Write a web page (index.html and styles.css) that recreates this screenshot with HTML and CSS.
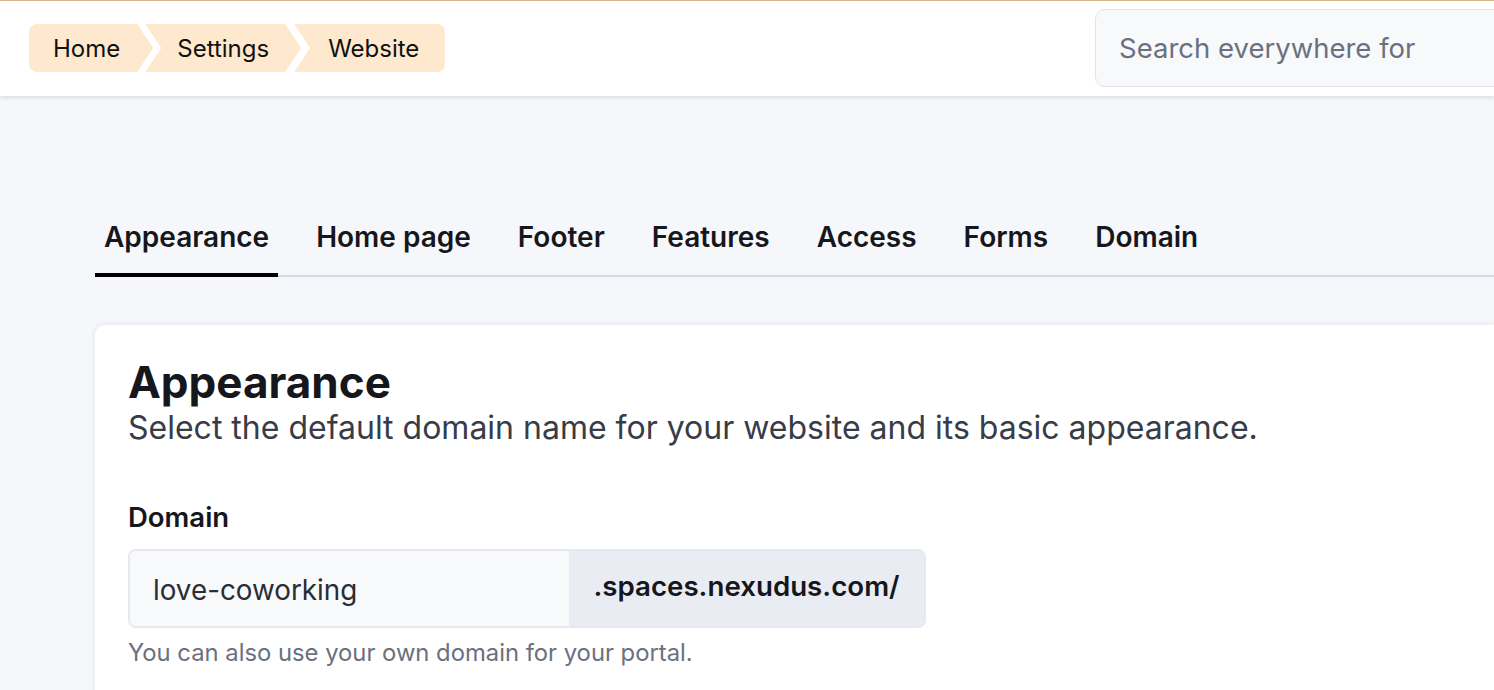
FILE: index.html
```html
<!DOCTYPE html>
<html lang="en">
<head>
<meta charset="utf-8">
<title>Website settings</title>
<link rel="stylesheet" href="styles.css">
</head>
<body>
<header class="topbar">
  <nav class="crumbs">
    <a class="crumb crumb-first">Home</a>
    <a class="crumb crumb-mid">Settings</a>
    <a class="crumb crumb-last">Website</a>
  </nav>
  <div class="search">
    <span class="search-placeholder">Search everywhere for</span>
  </div>
</header>
<main class="main">
  <div class="tabs">
    <a class="tab active">Appearance</a>
    <a class="tab">Home page</a>
    <a class="tab">Footer</a>
    <a class="tab">Features</a>
    <a class="tab">Access</a>
    <a class="tab">Forms</a>
    <a class="tab">Domain</a>
  </div>
  <section class="card">
    <h1 class="card-title">Appearance</h1>
    <p class="card-sub">Select the default domain name for your website and its basic appearance.</p>
    <div class="field">
      <label class="field-label">Domain</label>
      <div class="input-group">
        <div class="input">love-coworking</div>
        <div class="addon">.spaces.nexudus.com/</div>
      </div>
      <p class="help">You can also use your own domain for your portal.</p>
    </div>
  </section>
</main>
</body>
</html>
```
FILE: styles.css
```css
* { box-sizing: border-box; }
html, body { margin: 0; padding: 0; }
body {
  font-family: Inter, "Noto Sans", sans-serif;
  background: #f6f7fa;
  color: #16171c;
  overflow: hidden;
  width: 1494px;
  height: 690px;
}
.topbar {
  height: 96px;
  background: #fff;
  border-top: 1px solid #d6b48d;
  box-shadow: 0 2px 4px rgba(30, 40, 70, 0.12);
  display: flex;
  align-items: center;
  justify-content: space-between;
  padding-left: 29px;
  position: relative;
  z-index: 1;
}
.crumbs {
  display: flex;
  height: 48px;
  margin-top: -1px;
}
.crumb {
  display: flex;
  align-items: center;
  background: #fee9ce;
  color: #111;
  font-size: 24px;
  height: 48px;
}
.crumb-first {
  padding: 0 33px 0 24px;
  border-radius: 8px 0 0 8px;
  clip-path: polygon(0 0, calc(100% - 16px) 0, 100% 50%, calc(100% - 16px) 100%, 0 100%);
}
.crumb-mid {
  margin-left: -8px;
  padding: 0 32px 0 32px;
  clip-path: polygon(0 0, calc(100% - 16px) 0, 100% 50%, calc(100% - 16px) 100%, 0 100%, 16px 50%);
}
.crumb-last {
  margin-left: -7px;
  padding: 0 26px 0 34px;
  border-radius: 0 8px 8px 0;
  clip-path: polygon(0 0, 100% 0, 100% 100%, 0 100%, 16px 50%);
}
.search {
  width: 420px;
  height: 78px;
  margin-right: -21px;
  margin-top: -1px;
  background: #f8f9fb;
  border: 1.5px solid #dfe3ec;
  border-radius: 10px;
  display: flex;
  align-items: center;
  padding-left: 23px;
}
.search-placeholder {
  color: #6b7080;
  font-size: 27.5px;
}
.main {
  padding: 0 0 0 95px;
}
.tabs {
  display: flex;
  gap: 29px;
  margin-top: 114px;
  border-bottom: 2px solid #d3d9e4;
}
.tab {
  padding: 8px 9px 17px;
  font-size: 28px;
  font-weight: 600;
  color: #16171c;
  border-bottom: 4px solid transparent;
  margin-bottom: -2px;
  line-height: 38px;
}
.tab.active {
  border-bottom-color: #000;
}
.card {
  margin-top: 48px;
  background: #fff;
  border-radius: 10px 0 0 0;
  box-shadow: 0 0 6px rgba(30, 40, 70, 0.10);
  padding: 30px 33px 40px;
  min-height: 400px;
}
.card-title {
  margin: 0;
  font-size: 44px;
  font-weight: 700;
  line-height: 54px;
  color: #16171c;
}
.card-sub {
  margin: 0;
  font-size: 32px;
  line-height: 38px;
  color: #373c48;
}
.field {
  margin-top: 54px;
}
.field-label {
  display: block;
  font-size: 27.5px;
  font-weight: 600;
  line-height: 32px;
  color: #16171c;
}
.input-group {
  display: flex;
  width: 798px;
  height: 79px;
  margin-top: 16px;
  border: 2px solid #e6e9f0;
  border-radius: 8px;
  overflow: hidden;
}
.input {
  width: 439px;
  background: #f8f9fb;
  display: flex;
  align-items: center;
  padding-left: 23px;
  font-size: 27.8px;
  color: #2a2d35;
  padding-top: 2px;
}
.addon {
  flex: 1;
  background: #e9ecf3;
  display: flex;
  align-items: center;
  justify-content: center;
  font-size: 27.7px;
  font-weight: 600;
  color: #16171c;
  padding-bottom: 6px;
}
.help {
  margin: 10px 0 0;
  font-size: 23.8px;
  line-height: 29px;
  color: #6b7080;
}
```
